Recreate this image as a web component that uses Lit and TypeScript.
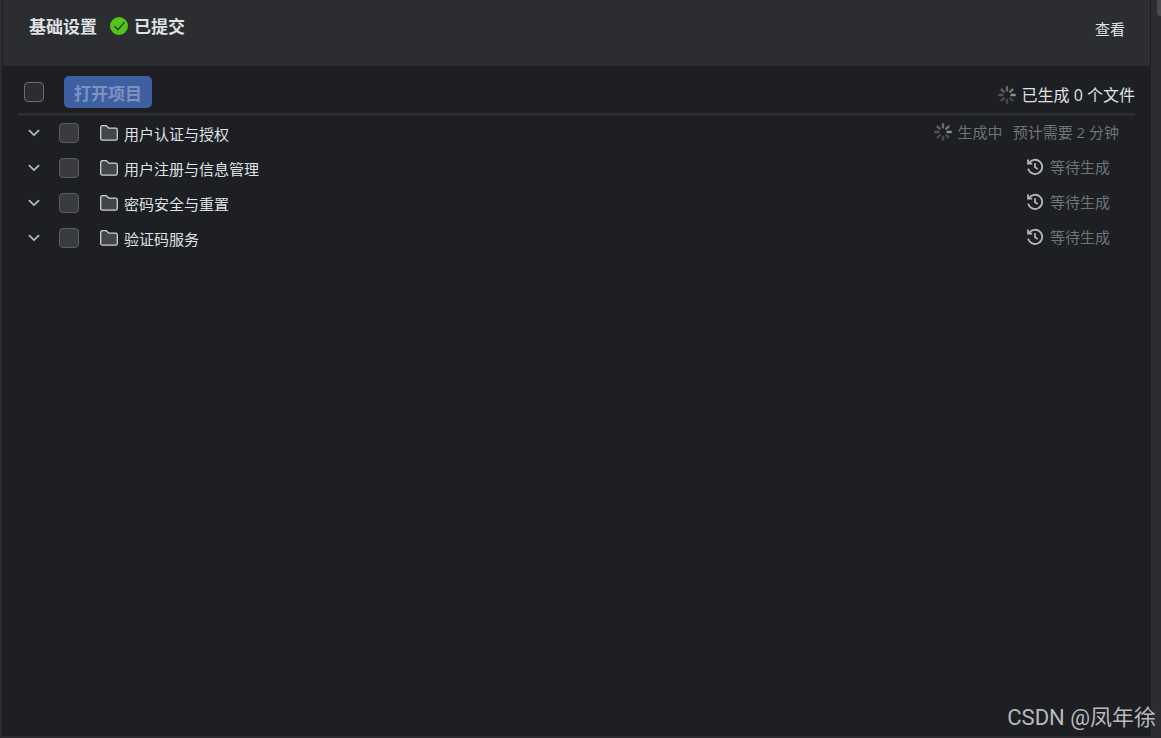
import { LitElement, html, css, svg } from "lit";
import { customElement, state } from "lit/decorators.js";
import { classMap } from "lit/directives/class-map.js";

interface Module {
  name: string;
  status: "running" | "waiting";
  eta?: string;
}

const spokes = [
  { angle: 0, alpha: 0.62 },
  { angle: 45, alpha: 0.24 },
  { angle: 90, alpha: 0.24 },
  { angle: 135, alpha: 0.26 },
  { angle: 180, alpha: 0.3 },
  { angle: 225, alpha: 0.36 },
  { angle: 270, alpha: 0.42 },
  { angle: 315, alpha: 0.5 },
];

const spinner = html`<svg class="icon" width="18" height="18" viewBox="0 0 18 18" aria-hidden="true">
  ${spokes.map(
    (s) => svg`<path d="M13.6 9H16.7" stroke="#d0d2d8" stroke-width="2.4" stroke-linecap="round"
      stroke-opacity=${s.alpha} transform="rotate(${s.angle} 9 9)" />`,
  )}
</svg>`;

const history = html`<svg class="icon" width="18" height="18" viewBox="0 0 18 18" fill="none" stroke="#b4b6ba" stroke-width="1.8" aria-hidden="true">
  <path d="M2.9 5.4A7.1 7.1 0 1 1 2.2 10.6" />
  <path d="M2 1.6V5.7H6.2" />
  <path d="M9 5.3V9.3L11.8 11" />
</svg>`;

const folder = html`<svg class="icon" width="18" height="16" viewBox="0 0 18 16" aria-hidden="true">
  <path d="M.7 2.4C.7 1.4 1.4.7 2.4.7H6.3L8.8 3.1H15.6C16.6 3.1 17.3 3.8 17.3 4.8V13.4C17.3 14.4 16.6 15.1 15.6 15.1H2.4C1.4 15.1.7 14.4.7 13.4Z"
    fill="#43454a" stroke="#ced0d6" stroke-width="1.3" />
</svg>`;

const chevron = html`<svg width="12" height="8" viewBox="0 0 12 8" fill="none" aria-hidden="true">
  <path d="M1.4 1.6L6 6.1L10.6 1.6" stroke="#b4b8bf" stroke-width="1.8" stroke-linecap="round" />
</svg>`;

const success = html`<svg class="icon" width="18" height="18" viewBox="0 0 18 18" aria-hidden="true">
  <circle cx="9" cy="9" r="9" fill="#52c41a" />
  <path d="M4.4 9.2L7.9 12.6L14.4 5.4" fill="none" stroke="#2b2d30" stroke-width="1.3" />
</svg>`;

@customElement("app-root")
export class AppRoot extends LitElement {
  @state() private modules: Module[] = [
    { name: "用户认证与授权", status: "running", eta: "预计需要 2 分钟" },
    { name: "用户注册与信息管理", status: "waiting" },
    { name: "密码安全与重置", status: "waiting" },
    { name: "验证码服务", status: "waiting" },
  ];

  static styles = css`
    :host {
      display: block;
      color: #dfe1e5;
      font-family: "Open Sans", "Noto Sans CJK SC", sans-serif;
      font-size: 15px;
      line-height: 20px;
    }
    .frame {
      position: relative;
      box-sizing: border-box;
      min-height: 100vh;
      padding: 0 10px 2px 2px;
      display: flex;
      overflow: hidden;
      background: #2b2d30;
    }
    .panel {
      flex: 1;
      min-width: 0;
      padding: 0 1px;
      background: #1e1f22;
    }
    .scroll {
      position: absolute;
      top: 0;
      right: 0;
      width: 4px;
      height: 16px;
      border-bottom-left-radius: 4px;
      background: #4b4c4f;
    }
    .head {
      display: flex;
      align-items: flex-start;
      justify-content: space-between;
      box-sizing: border-box;
      height: 66px;
      padding: 17px 25px 0 26px;
      background: #2b2d30;
    }
    .title {
      display: flex;
      align-items: center;
      margin: 0;
      font-size: 17px;
      font-weight: 700;
    }
    .title .icon {
      margin: 0 6px 2px 13px;
    }
    .icon {
      display: block;
      flex: none;
    }
    .view {
      margin-top: 2px;
      color: inherit;
      text-decoration: none;
    }
    .body {
      padding: 0 15px;
    }
    .tools {
      display: flex;
      align-items: center;
      padding: 10px 0 5px 6px;
      border-bottom: 3px solid #2b2d30;
    }
    .check {
      appearance: none;
      flex: none;
      box-sizing: border-box;
      width: 20px;
      height: 20px;
      margin: 0;
      border: 1px solid #5a5d63;
      border-radius: 4px;
      background: #393b40;
    }
    .all {
      border-color: #6b6d71;
      background: #2b2d30;
    }
    .open {
      height: 32px;
      margin-left: 20px;
      padding: 4px 10px 0;
      border: 0;
      border-radius: 5px;
      background: #3f5fa3;
      color: #7c92c1;
      font: inherit;
      font-size: 17px;
      font-weight: 700;
    }
    .count {
      display: flex;
      align-items: center;
      gap: 6px;
      margin-left: auto;
      padding-top: 6px;
      font-size: 16px;
    }
    .list {
      margin: 0;
      padding: 0;
      list-style: none;
    }
    .row {
      display: flex;
      align-items: center;
      box-sizing: border-box;
      height: 35px;
      padding: 0 0 2px 9px;
    }
    .toggle {
      display: flex;
      padding: 5px 1px 4px;
      margin-right: 18px;
      border: 0;
      background: none;
    }
    .name {
      display: flex;
      align-items: center;
      gap: 6px;
      margin-left: 21px;
    }
    .name span {
      padding-top: 2px;
    }
    .status {
      display: flex;
      align-items: center;
      gap: 6px;
      margin-left: auto;
      padding: 0 25px 2px 0;
      color: #6f737a;
    }
    .running {
      padding-right: 16px;
    }
    .eta {
      margin-left: 4px;
    }
    .mark {
      position: absolute;
      right: 5px;
      bottom: 4px;
      color: #b9babc;
      font-family: Roboto, "Noto Sans CJK SC", sans-serif;
      font-size: 22px;
      line-height: 32px;
    }
  `;

  private row(m: Module, i: number) {
    const running = m.status === "running";
    return html`<li class="row">
      <button class="toggle" type="button" aria-label=${"展开 " + m.name}>${chevron}</button>
      <input class="check" type="checkbox" id=${"module-" + i} />
      <label class="name" for=${"module-" + i}>${folder}<span>${m.name}</span></label>
      <div class=${classMap({ status: true, running })}>
        ${running ? spinner : history}
        <span>${running ? "生成中" : "等待生成"}</span>
        ${m.eta ? html`<span class="eta">${m.eta}</span>` : ""}
      </div>
    </li>`;
  }

  render() {
    return html`<div class="frame">
      <main class="panel">
        <header class="head">
          <h1 class="title"><span>基础设置</span>${success}<span>已提交</span></h1>
          <a class="view" href="#">查看</a>
        </header>
        <section class="body">
          <div class="tools">
            <input class="check all" type="checkbox" aria-label="全选" />
            <button class="open" type="button" disabled>打开项目</button>
            <div class="count">${spinner}<span>已生成 0 个文件</span></div>
          </div>
          <ul class="list">${this.modules.map((m, i) => this.row(m, i))}</ul>
        </section>
      </main>
      <div class="scroll"></div>
      <div class="mark">CSDN @凤年徐</div>
    </div>`;
  }
}
